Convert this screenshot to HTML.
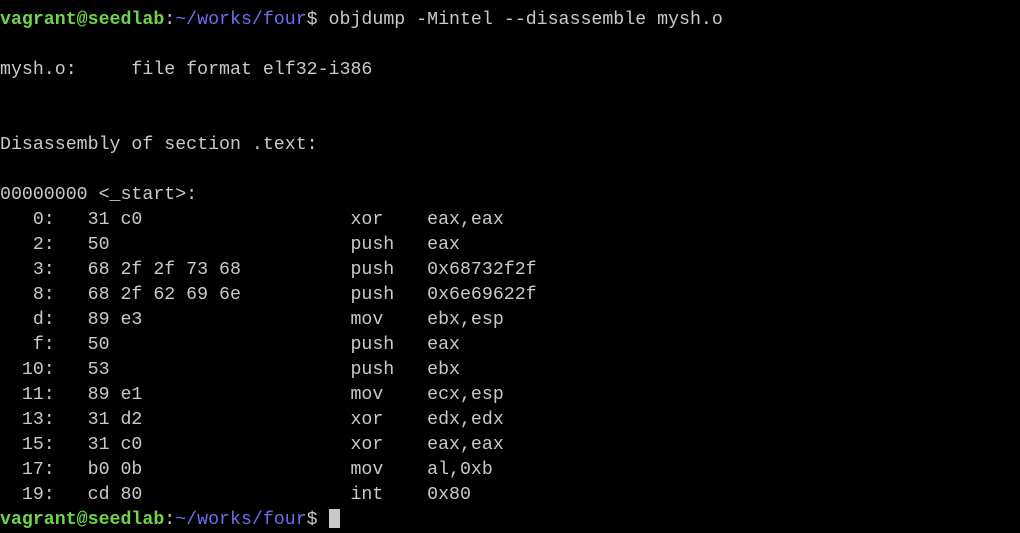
<!DOCTYPE html>
<html><head><style>
html,body{margin:0;padding:0;background:#000;width:1020px;height:524px;overflow:hidden}
pre{position:absolute;left:0;top:8px;margin:0;font-family:"Liberation Mono",monospace;font-size:18.25px;line-height:25px;color:#c9c9c9}
.g{color:#6fd44a;font-weight:bold}
.b{color:#6b6ef0}
.cur{display:inline-block;width:11px;height:19px;background:#c9c9c9;vertical-align:-4px}
</style></head><body>
<pre><span class="g">vagrant@seedlab</span>:<span class="b">~/works/four</span>$ objdump -Mintel --disassemble mysh.o

mysh.o:     file format elf32-i386


Disassembly of section .text:

00000000 &lt;_start&gt;:
   0:   31 c0                   xor    eax,eax
   2:   50                      push   eax
   3:   68 2f 2f 73 68          push   0x68732f2f
   8:   68 2f 62 69 6e          push   0x6e69622f
   d:   89 e3                   mov    ebx,esp
   f:   50                      push   eax
  10:   53                      push   ebx
  11:   89 e1                   mov    ecx,esp
  13:   31 d2                   xor    edx,edx
  15:   31 c0                   xor    eax,eax
  17:   b0 0b                   mov    al,0xb
  19:   cd 80                   int    0x80
<span class="g">vagrant@seedlab</span>:<span class="b">~/works/four</span>$ <span class="cur"></span></pre>
</body></html>
